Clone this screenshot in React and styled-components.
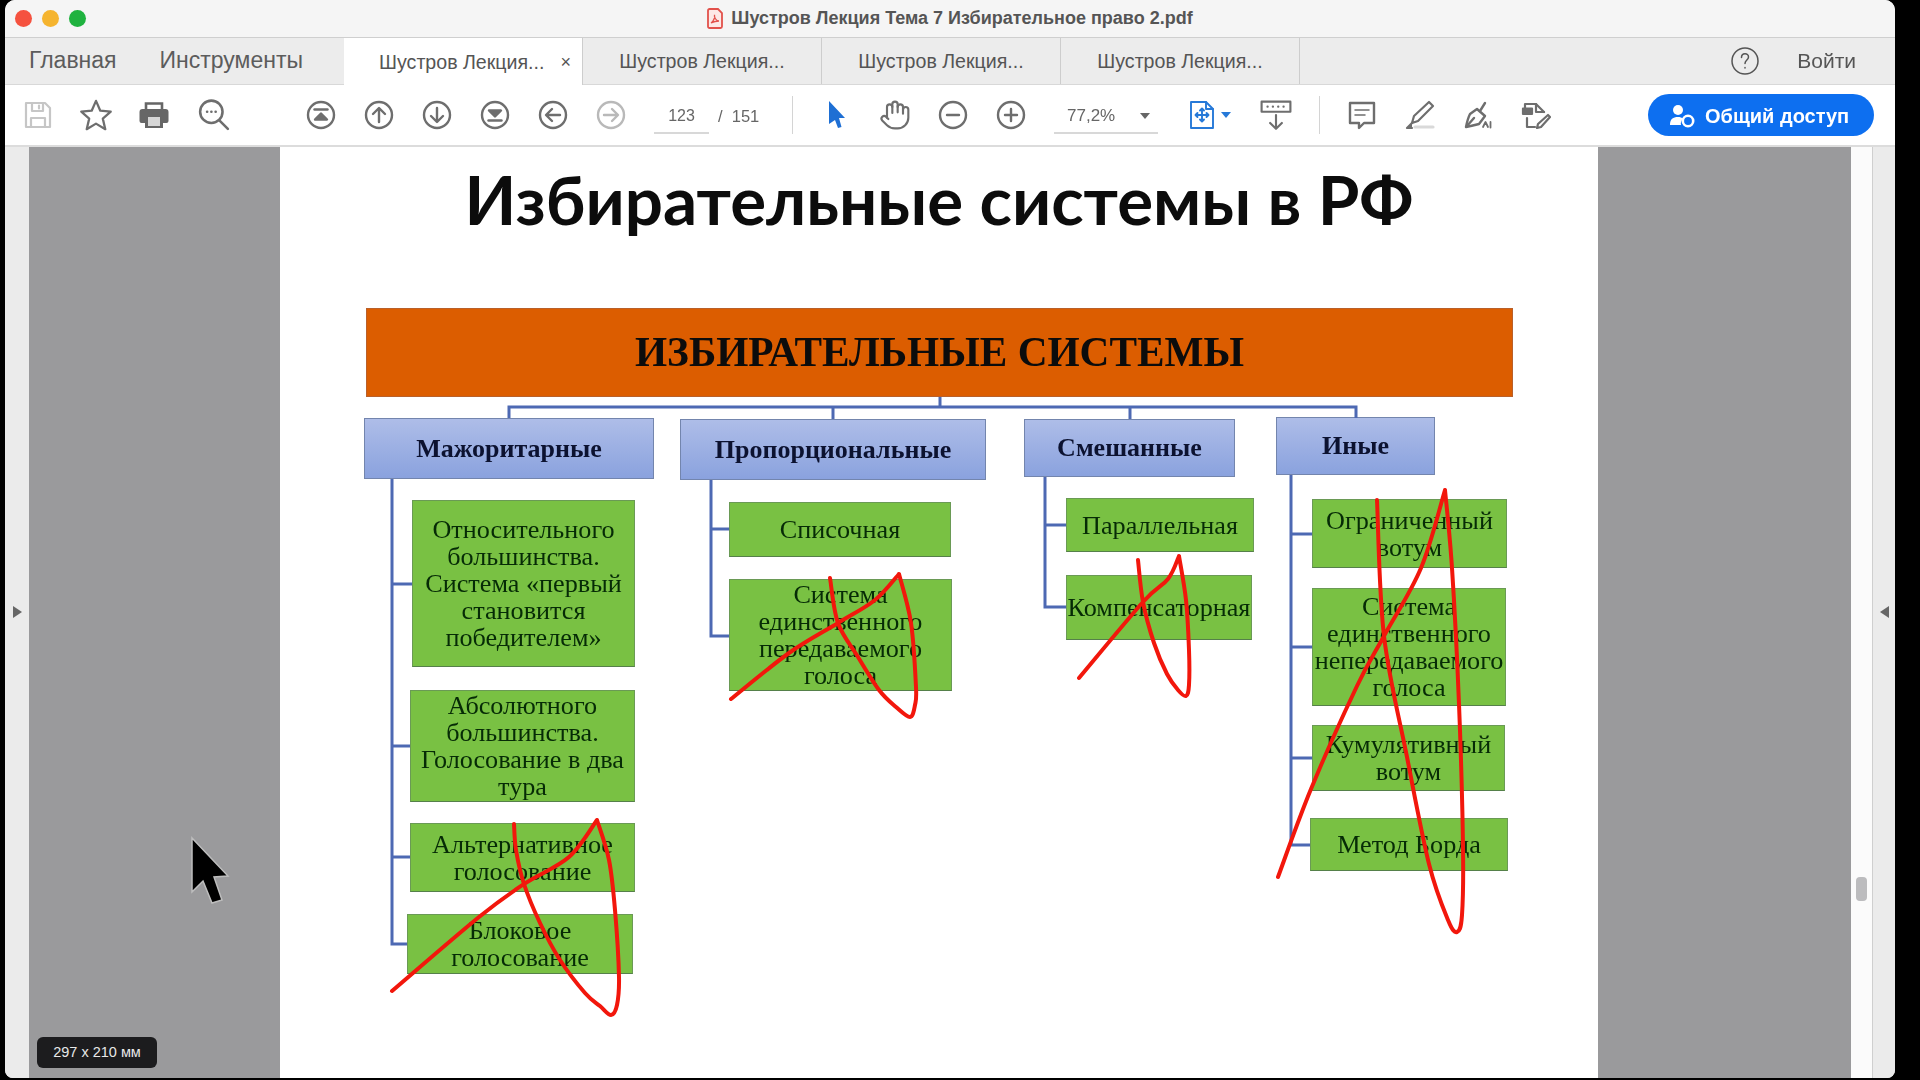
import React from 'react';
import styled, { createGlobalStyle } from 'styled-components';
import { Hand } from 'lucide-react';

const GlobalStyle = createGlobalStyle`
    html, body {
        margin: 0;
        padding: 0;
        background: #000;
    }
    body {
        font-family: "Liberation Sans", Arial, sans-serif;
        overflow: hidden;
    }
    * {
        box-sizing: border-box;
    }
`;

const Screen = styled.div`
    width: 1920px;
    height: 1080px;
    padding: 0 25px 2px 5px;
    background: #000;
    position: relative;
    overflow: hidden;
`;

const Window = styled.div`
    width: 1890px;
    height: 1078px;
    display: flex;
    flex-direction: column;
    background: #fff;
    border-radius: 10px 10px 8px 8px;
    overflow: hidden;
    filter: blur(0.6px);
`;

const TitleBar = styled.div`
    height: 38px;
    flex: none;
    position: relative;
    display: flex;
    align-items: center;
    justify-content: center;
    gap: 8px;
    background: #f5f5f5;
    border-bottom: 1px solid #cfcfcf;
`;

const Lights = styled.div`
    position: absolute;
    left: 10px;
    top: 10px;
    display: flex;
    gap: 10px;
`;

const Light = styled.span`
    width: 17px;
    height: 17px;
    border-radius: 50%;
    background: ${(p) => p.$color};
`;

const TitleText = styled.span`
    font-size: 18px;
    font-weight: 700;
    color: #555;
`;

const TabBar = styled.div`
    height: 47px;
    flex: none;
    display: flex;
    background: #ececec;
    border-bottom: 1px solid #d8d8d8;
`;

const HomeTabs = styled.div`
    width: 339px;
    display: flex;
    align-items: center;
    gap: 43px;
    padding: 0 0 2px 24px;
    font-size: 23px;
    color: #5c5c5c;
`;

const Tab = styled.div`
    width: 239px;
    display: flex;
    align-items: center;
    justify-content: center;
    gap: 16px;
    padding: 1px 0 0 ${(p) => (p.$active ? '24px' : '0')};
    font-size: 19.6px;
    color: #555;
    background: ${(p) => (p.$active ? '#fff' : 'transparent')};
    border-right: 1px solid #cdcdcd;
    margin-bottom: ${(p) => (p.$active ? '-1px' : '0')};
`;

const TabClose = styled.span`
    font-size: 18px;
    color: #555;
`;

const TabActions = styled.div`
    margin-left: auto;
    display: flex;
    align-items: center;
    gap: 37px;
    padding-right: 39px;
    font-size: 21px;
    color: #555;
`;

const Toolbar = styled.div`
    height: 62px;
    flex: none;
    display: flex;
    align-items: center;
    padding-left: 4px;
    background: #fff;
    border-bottom: 2px solid #dcdcdc;
`;

const ToolSlot = styled.div`
    width: ${(p) => p.$w || 58}px;
    margin-left: ${(p) => p.$ml || 0}px;
    height: 36px;
    flex: none;
    display: flex;
    align-items: center;
    justify-content: center;
    gap: 4px;
    color: #6e6e6e;
`;

const PageInput = styled.div`
    width: 55px;
    margin-left: 14px;
    height: 38px;
    line-height: 40px;
    text-align: center;
    font-size: 16px;
    color: #666;
    border-bottom: 2px solid #d8d8d8;
`;

const PageTotal = styled.div`
    margin-left: 9px;
    padding-top: 3px;
    width: 74px;
    font-size: 16.5px;
    color: #666;
`;

const Divider = styled.div`
    width: 1px;
    height: 38px;
    flex: none;
    background: #d4d4d4;
    margin-left: ${(p) => p.$ml || 0}px;
    margin-right: ${(p) => p.$mr || 0}px;
`;

const ZoomField = styled.div`
    width: 104px;
    margin-left: 14px;
    height: 38px;
    padding: 3px 8px 0 13px;
    display: flex;
    align-items: center;
    justify-content: space-between;
    font-size: 17px;
    color: #666;
    border-bottom: 2px solid #d8d8d8;
`;

const Caret = styled.span`
    width: 0;
    height: 0;
    border-left: 5px solid transparent;
    border-right: 5px solid transparent;
    border-top: 6px solid ${(p) => p.$color || '#666'};
`;

const ShareButton = styled.div`
    margin-left: auto;
    margin-right: 21px;
    width: 226px;
    height: 42px;
    display: flex;
    align-items: center;
    gap: 10px;
    padding: 2px 0 0 21px;
    border-radius: 21px;
    background: #0d6ff0;
    color: #fff;
    font-size: 20px;
    font-weight: 700;
`;

const Content = styled.div`
    flex: 1;
    display: flex;
    min-height: 0;
    background: #9a9a9c;
`;

const SideRail = styled.div`
    width: ${(p) => p.$w}px;
    flex: none;
    display: flex;
    align-items: center;
    justify-content: center;
    padding-bottom: 1px;
    background: #ebebeb;
    border-left: ${(p) => (p.$right ? '1px solid #cfcfcf' : 'none')};
`;

const RailArrow = styled.span`
    width: 0;
    height: 0;
    border-top: 6px solid transparent;
    border-bottom: 6px solid transparent;
    ${(p) => (p.$right ? 'border-right: 9px solid #666;' : 'border-left: 9px solid #666;')}
`;

const Gutter = styled.div`
    width: ${(p) => p.$w}px;
    flex: none;
    position: relative;
    background: #9a9a9c;
`;

const SizeBadge = styled.div`
    position: absolute;
    left: 8px;
    bottom: 10px;
    width: 120px;
    height: 31px;
    line-height: 31px;
    text-align: center;
    border-radius: 6px;
    background: #1c1c1e;
    color: #e8e8e8;
    font-size: 14.5px;
    font-weight: 400;
`;

const ScrollTrack = styled.div`
    width: 21px;
    flex: none;
    position: relative;
    background: #fbfbfb;
`;

const ScrollThumb = styled.div`
    position: absolute;
    left: 5px;
    top: 730px;
    width: 11px;
    height: 24px;
    border-radius: 4px;
    background: #bcbcbe;
`;

const Page = styled.div`
    width: 1318px;
    flex: none;
    position: relative;
    overflow: hidden;
    padding: 10px 0 0 84px;
    background: #fff;
`;

const SlideTitle = styled.h1`
    margin: 0 0 66px -84px;
    height: 85px;
    line-height: 85px;
    text-align: center;
    font-family: Lato, "Open Sans", sans-serif;
    font-size: 67.3px;
    font-weight: 700;
    color: #0c0c0c;
`;

const Banner = styled.div`
    margin-left: 2px;
    width: 1147px;
    height: 89px;
    display: flex;
    align-items: center;
    justify-content: center;
    padding-bottom: 2px;
    background: #dc5d00;
    border: 1px solid #b9602a;
    font-family: "Liberation Serif", serif;
    font-size: 41.3px;
    font-weight: 700;
    color: #0c0c0c;
`;

const Tree = styled.div`
    margin-top: 20px;
    display: grid;
    grid-template-columns: 316px 344px 252px 240px;
    align-items: start;
`;

const Column = styled.div`
    display: flex;
    flex-direction: column;
    align-items: flex-start;
    padding-top: ${(p) => p.$top}px;
`;

const Head = styled.div`
    width: ${(p) => p.$w}px;
    height: ${(p) => p.$h}px;
    display: flex;
    align-items: center;
    justify-content: center;
    background: linear-gradient(#aebde8, #8aa2de);
    border: 1px solid #7385ad;
    font-family: "Liberation Serif", serif;
    font-size: 26px;
    font-weight: 700;
    color: #0c1230;
`;

const Leaf = styled.div`
    width: ${(p) => p.$w}px;
    height: ${(p) => p.$h}px;
    margin-top: ${(p) => p.$mt}px;
    margin-left: ${(p) => p.$ml}px;
    display: flex;
    align-items: center;
    justify-content: center;
    text-align: center;
    background: #79c143;
    border: 1px solid #6a9a55;
    border-bottom-color: #55804a;
    font-family: "Liberation Serif", serif;
    font-size: 26.2px;
    line-height: 27px;
    color: #062b06;
`;

const Overlay = styled.svg`
    position: absolute;
    left: 0;
    top: 0;
    width: 1318px;
    height: 931px;
    pointer-events: none;
`;

const MouseCursor = styled.svg`
    position: absolute;
    left: 190px;
    top: 836px;
`;

const columns = [
    {
        title: 'Мажоритарные',
        top: 1,
        w: 290,
        h: 61,
        leaves: [
            { mt: 21, ml: 48, w: 223, h: 167, text: 'Относительного большинства. Система «первый становится победителем»' },
            { mt: 23, ml: 46, w: 225, h: 112, text: 'Абсолютного большинства. Голосование в два тура' },
            { mt: 21, ml: 46, w: 225, h: 69, text: 'Альтернативное голосование' },
            { mt: 22, ml: 43, w: 226, h: 60, text: 'Блоковое голосование' },
        ],
    },
    {
        title: 'Пропорциональные',
        top: 2,
        w: 306,
        h: 61,
        leaves: [
            { mt: 22, ml: 49, w: 222, h: 55, text: 'Списочная' },
            { mt: 22, ml: 49, w: 223, h: 112, text: 'Система единственного передаваемого голоса' },
        ],
    },
    {
        title: 'Смешанные',
        top: 2,
        w: 211,
        h: 58,
        leaves: [
            { mt: 21, ml: 42, w: 188, h: 54, text: 'Параллельная' },
            { mt: 23, ml: 42, w: 186, h: 65, text: 'Компенсаторная' },
        ],
    },
    {
        title: 'Иные',
        top: 0,
        w: 159,
        h: 58,
        leaves: [
            { mt: 24, ml: 36, w: 195, h: 69, text: 'Ограниченный вотум' },
            { mt: 20, ml: 36, w: 194, h: 118, text: 'Система единственного непередаваемого голоса' },
            { mt: 19, ml: 36, w: 193, h: 66, text: 'Кумулятивный вотум' },
            { mt: 27, ml: 34, w: 198, h: 53, text: 'Метод Борда' },
        ],
    },
];

// connector lines of the chart, in screen coordinates
const connectors = [
    'M940 397V407', 'M509 418V407H1356V418', 'M833 407V419', 'M1130 407V419',
    'M392 479V944H407', 'M392 584H412', 'M392 746H410', 'M392 857H410',
    'M711 480V636H729', 'M711 529H729',
    'M1045 477V607H1066', 'M1045 525H1066',
    'M1291 475V845H1310', 'M1291 534H1312', 'M1291 647H1312', 'M1291 758H1312',
];

// pen strokes over the slide, each a list of parts that meet at a sharp corner
const scribbles = [
    [
        [[392, 991], [479, 917], [524, 884], [569, 857], [597, 820]],
        [[597, 820], [609, 860], [615, 910], [619, 977], [617, 1005], [611, 1015], [600, 1006], [585, 993], [560, 960], [540, 923], [524, 884], [516, 850], [514, 824]],
    ],
    [
        [[731, 699], [789, 653], [838, 623], [875, 600], [899, 574]],
        [[899, 574], [911, 623], [916, 687], [915, 705], [910, 717], [896, 707], [879, 690], [858, 657], [838, 623], [830, 578]],
    ],
    [
        [[1079, 678], [1143, 602], [1168, 579], [1179, 556]],
        [[1179, 556], [1186, 600], [1189, 650], [1189, 685], [1186, 696], [1178, 690], [1167, 674], [1154, 643], [1143, 602], [1138, 560]],
    ],
    [
        [[1278, 877], [1311, 789], [1357, 686], [1384, 636], [1421, 568], [1445, 490]],
        [[1445, 490], [1452, 568], [1459, 704], [1463, 846], [1462, 915], [1457, 932], [1448, 920], [1429, 864], [1407, 757], [1384, 636], [1377, 500]],
    ],
];

const smooth = (pts) => {
    let d = '';
    for (let i = 0; i < pts.length - 1; i++) {
        const p0 = pts[i - 1] || pts[i];
        const p1 = pts[i];
        const p2 = pts[i + 1];
        const p3 = pts[i + 2] || p2;
        const c1 = [p1[0] + (p2[0] - p0[0]) / 6, p1[1] + (p2[1] - p0[1]) / 6];
        const c2 = [p2[0] - (p3[0] - p1[0]) / 6, p2[1] - (p3[1] - p1[1]) / 6];
        d += `${i === 0 ? `M${p1[0]} ${p1[1]}` : ''}C${c1[0]} ${c1[1]} ${c2[0]} ${c2[1]} ${p2[0]} ${p2[1]}`;
    }
    return d;
};

const Icon = ({ size = 30, color = 'currentColor', width = 2.4, children }) => (
    <svg width={size} height={size} viewBox="0 0 30 30" fill="none" stroke={color} strokeWidth={width} strokeLinecap="round" strokeLinejoin="round">
        {children}
    </svg>
);

const NavIcon = ({ light, children }) => (
    <Icon color={light ? '#b9b9b9' : '#6e6e6e'}>
        <circle cx="15" cy="15" r="13" />
        {children}
    </Icon>
);

const PdfIcon = () => (
    <svg width="16" height="21" viewBox="0 0 16 21" fill="#fde8e6" stroke="#e2514b" strokeWidth="1.8">
        <path d="M2.5 1H11L15 5V18.5A1.5 1.5 0 0 1 13.5 20H2.5A1.5 1.5 0 0 1 1 18.5V2.5A1.5 1.5 0 0 1 2.5 1Z" />
        <path d="M4 15C7 13 8 9 7.5 7C7 9 9 13 12 13C9 13 6 14 4 15Z" fill="none" strokeWidth="1.3" />
    </svg>
);

const UserShareIcon = () => (
    <svg width="26" height="24" viewBox="0 0 26 24" fill="#fff">
        <circle cx="9" cy="6" r="5" />
        <path d="M1 21C1 15 4 13 9 13C11 13 13 13.5 14 15C12 16.5 11.5 19 12 21Z" />
        <circle cx="19" cy="17" r="5.2" fill="none" stroke="#fff" strokeWidth="2.6" />
    </svg>
);

const App = () => (
    <Screen>
        <GlobalStyle />
        <Window>
            <TitleBar>
                <Lights>
                    <Light $color="#f5523f" />
                    <Light $color="#f5b42f" />
                    <Light $color="#1fb23f" />
                </Lights>
                <PdfIcon />
                <TitleText>Шустров Лекция Тема 7 Избирательное право 2.pdf</TitleText>
            </TitleBar>

            <TabBar>
                <HomeTabs>
                    <span>Главная</span>
                    <span>Инструменты</span>
                </HomeTabs>
                <Tab $active>
                    <span>Шустров Лекция...</span>
                    <TabClose>×</TabClose>
                </Tab>
                <Tab>Шустров Лекция...</Tab>
                <Tab>Шустров Лекция...</Tab>
                <Tab>Шустров Лекция...</Tab>
                <TabActions>
                    <Icon size={30} width={1.5}>
                        <circle cx="15" cy="15" r="13" />
                        <path d="M11.5 11.5C11.5 6.5 18.5 6.5 18.5 11C18.5 14 15 14 15 17.5" />
                        <path d="M15 21.5V22" />
                    </Icon>
                    <span>Войти</span>
                </TabActions>
            </TabBar>

            <Toolbar>
                <ToolSlot>
                    <Icon color="#c6c6c6" width={2.2}>
                        <path d="M3 3H22L27 8V27H3Z" />
                        <path d="M9 3V11H20V3M16 5.5V8.5M8 27V18H22V27" />
                    </Icon>
                </ToolSlot>
                <ToolSlot>
                    <Icon size={34} width={2}>
                        <path d="M15 2.5L18.8 11.2L28 12L21 18.2L23.2 27.5L15 22.6L6.8 27.5L9 18.2L2 12L11.2 11.2Z" />
                    </Icon>
                </ToolSlot>
                <ToolSlot>
                    <svg width="30" height="28" viewBox="0 0 30 28">
                        <path d="M7 9V2.5H23V9" fill="none" stroke="#666" strokeWidth="2.6" />
                        <path d="M3.5 8H26.5A3 3 0 0 1 29.5 11V20A2 2 0 0 1 27.5 22H24V27H6V22H2.5A2 2 0 0 1 .5 20V11A3 3 0 0 1 3.5 8Z" fill="#666" />
                        <path d="M9 16H21V25H9Z" fill="#d6d6d6" />
                    </svg>
                </ToolSlot>
                <ToolSlot $ml={2}>
                    <Icon size={32}>
                        <circle cx="12.5" cy="12" r="10.5" />
                        <path d="M20 20L28 28" />
                        <path d="M8.5 12H8.6M12.5 12H12.6M16.5 12H16.6" />
                    </Icon>
                </ToolSlot>

                <ToolSlot $ml={49}>
                    <NavIcon>
                        <path d="M8.5 9.5H21.5" />
                        <path d="M9 19.5L15 13.5L21 19.5Z" fill="currentColor" stroke="#6e6e6e" />
                    </NavIcon>
                </ToolSlot>
                <ToolSlot>
                    <NavIcon>
                        <path d="M15 22V8.5M9 14L15 8L21 14" />
                    </NavIcon>
                </ToolSlot>
                <ToolSlot>
                    <NavIcon>
                        <path d="M15 8V21.5M9 16L15 22L21 16" />
                    </NavIcon>
                </ToolSlot>
                <ToolSlot>
                    <NavIcon>
                        <path d="M8.5 20.5H21.5" />
                        <path d="M9 10.5L15 16.5L21 10.5Z" fill="#6e6e6e" />
                    </NavIcon>
                </ToolSlot>
                <ToolSlot>
                    <NavIcon>
                        <path d="M22 15H8.5M14 9L8 15L14 21" />
                    </NavIcon>
                </ToolSlot>
                <ToolSlot>
                    <NavIcon light>
                        <path d="M8 15H21.5M16 9L22 15L16 21" />
                    </NavIcon>
                </ToolSlot>

                <PageInput>123</PageInput>
                <PageTotal>/&nbsp;&nbsp;151</PageTotal>
                <Divider />
                <ToolSlot $ml={15}>
                    <svg width="18" height="28" viewBox="0 0 18 28" fill="#1e6fd4">
                        <path d="M1 0L17 17H11L13.5 26L10 27L7 19L1 23Z" />
                    </svg>
                </ToolSlot>
                <ToolSlot>
                    <Hand size={32} strokeWidth={1.6} />
                </ToolSlot>
                <ToolSlot>
                    <NavIcon>
                        <path d="M9 15H21" />
                    </NavIcon>
                </ToolSlot>
                <ToolSlot>
                    <NavIcon>
                        <path d="M9 15H21M15 9V21" />
                    </NavIcon>
                </ToolSlot>

                <ZoomField>
                    <span>77,2%</span>
                    <Caret />
                </ZoomField>

                <ToolSlot $ml={22} $w={58}>
                    <Icon color="#2679d8" width={1.9} size={30}>
                        <path d="M4 2H19L26 9V28H4Z" />
                        <path d="M19 2V9H26" />
                        <path d="M15 9V21M9 15H21" />
                        <path d="M13 10.5L15 8.5L17 10.5M13 19.5L15 21.5L17 19.5M10.5 13L8.5 15L10.5 17M19.5 13L21.5 15L19.5 17" />
                    </Icon>
                    <Caret $color="#2679d8" />
                </ToolSlot>
                <ToolSlot $ml={9}>
                    <Icon size={32} width={2}>
                        <path d="M1.5 2.5H28.5V12H1.5Z" fill="none" />
                        <path d="M7 7.2H7.2M12 7.2H12.2M17 7.2H17.2M22 7.2H22.2" />
                        <path d="M15 15V28M9.5 22.5L15 28L20.5 22.5" />
                    </Icon>
                </ToolSlot>
                <Divider $ml={14} $mr={13} />
                <ToolSlot>
                    <Icon>
                        <path d="M3 3H27V23H17L12 28V23H3Z" />
                        <path d="M8 10H22M8 15H18" strokeWidth="1.5" />
                    </Icon>
                </ToolSlot>
                <ToolSlot>
                    <Icon width={2.2}>
                        <path d="M24 2L28 6L13 21L7 23L9 16Z" />
                        <path d="M7 23L2 28H7" fill="currentColor" />
                        <path d="M10 27H28" stroke="#d9d9d9" strokeWidth="3.2" />
                    </Icon>
                </ToolSlot>
                <ToolSlot>
                    <Icon width={2.4}>
                        <path d="M14 9L22 16L16 24C12 25 8 26 3 27C4 22 5 18 7 14Z" />
                        <path d="M17 11L22 3M4 26L11 18" />
                        <path d="M20 27L22.5 22L25 27M27.5 22V27.5" strokeWidth="1.8" />
                    </Icon>
                </ToolSlot>
                <ToolSlot>
                    <Icon width={2.2}>
                        <path d="M4 8V4H15L23 12" />
                        <path d="M15 4V12H23" />
                        <path d="M2 8.5H11V14H2Z" fill="currentColor" />
                        <path d="M6 18V27H14" />
                        <path d="M27 15L29 17L20 27L16 28L17 24Z" />
                    </Icon>
                </ToolSlot>

                <ShareButton>
                    <UserShareIcon />
                    <span>Общий доступ</span>
                </ShareButton>
            </Toolbar>

            <Content>
                <SideRail $w={24}>
                    <RailArrow />
                </SideRail>
                <Gutter $w={251}>
                    <SizeBadge>297 x 210 мм</SizeBadge>
                </Gutter>

                <Page>
                    <SlideTitle>Избирательные системы в РФ</SlideTitle>
                    <Banner>ИЗБИРАТЕЛЬНЫЕ СИСТЕМЫ</Banner>
                    <Tree>
                        {columns.map((col) => (
                            <Column key={col.title} $top={col.top}>
                                <Head $w={col.w} $h={col.h}>{col.title}</Head>
                                {col.leaves.map((leaf) => (
                                    <Leaf key={leaf.text} $mt={leaf.mt} $ml={leaf.ml} $w={leaf.w} $h={leaf.h}>
                                        <span>{leaf.text}</span>
                                    </Leaf>
                                ))}
                            </Column>
                        ))}
                    </Tree>
                    <Overlay viewBox="280 147 1318 931" fill="none">
                        <g stroke="#4d69b3" strokeWidth="3">
                            {connectors.map((d) => (
                                <path key={d} d={d} />
                            ))}
                        </g>
                        <g stroke="#f2170c" strokeWidth="4" strokeLinecap="round" strokeLinejoin="round">
                            {scribbles.map((parts, i) => (
                                <path key={i} d={parts.map(smooth).join('')} />
                            ))}
                        </g>
                    </Overlay>
                </Page>

                <Gutter $w={253} />
                <ScrollTrack>
                    <ScrollThumb />
                </ScrollTrack>
                <SideRail $w={23} $right>
                    <RailArrow $right />
                </SideRail>
            </Content>
        </Window>
        <MouseCursor width="40" height="68" viewBox="0 0 40 68">
            <path d="M2 2L38 40L24 41L32 64L22 67L13 45L2 56Z" fill="#000" stroke="#bdbdbd" strokeWidth="1.5" />
        </MouseCursor>
    </Screen>
);

export default App;
